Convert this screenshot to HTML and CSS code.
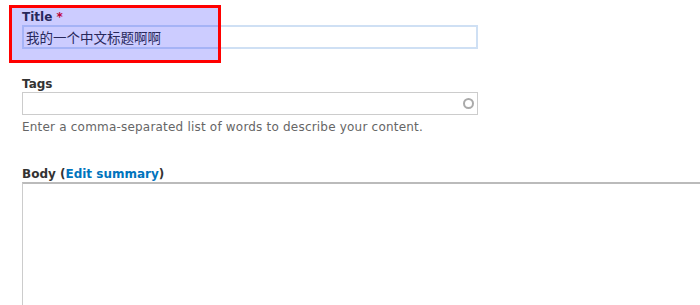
FILE: index.html
```html
<!DOCTYPE html>
<html lang="zh">
<head>
    <meta charset="UTF-8">
    <title>Create Article</title>
    <link rel="stylesheet" href="styles.css">
</head>
<body>
    <form class="node-form">
        <!-- Title -->
        <div class="form-item form-item-title">
            <label for="edit-title">Title <span class="form-required">*</span></label>
            <input type="text" id="edit-title" class="form-text focused" value="我的一个中文标题啊啊">
            <div class="highlight"></div>
        </div>

        <!-- Tags -->
        <div class="form-item form-item-tags">
            <label for="edit-tags">Tags</label>
            <div class="autocomplete">
                <input type="text" id="edit-tags" class="form-text">
                <span class="throbber"></span>
            </div>
            <div class="description">Enter a comma-separated list of words to describe your content.</div>
        </div>

        <!-- Body -->
        <div class="form-item form-item-body">
            <label for="edit-body">Body (<a href="#">Edit summary</a>)</label>
            <textarea id="edit-body" class="form-textarea"></textarea>
        </div>
    </form>
</body>
</html>
```

FILE: styles.css
```css
body {
    margin: 0;
    background-color: #fff;
    color: #333;
    font-family: "DejaVu Sans", Verdana, "Noto Sans CJK SC", sans-serif;
    font-size: 12px;
    overflow: hidden;
}
.node-form {
    padding: 9px 0 0 22px;
}
.form-item {
    position: relative;
}
label {
    display: block;
    font-weight: bold;
    line-height: 16px;
    color: #333;
}
label a {
    color: #0074bd;
    text-decoration: none;
}
.form-required {
    color: #e00;
}
.form-text {
    display: block;
    box-sizing: border-box;
    width: 456px;
    height: 24px;
    margin: 0;
    padding: 0 3px;
    border: 1px solid #ccc;
    background-color: #fff;
    font-family: "DejaVu Sans", "Noto Sans CJK SC", sans-serif;
    font-size: 13.5px;
    color: #333;
}
.form-text.focused {
    border: 2px solid #cfe0f4;
    padding: 0 2px;
}
.form-item-title {
    margin-bottom: 27px;
}
.highlight {
    position: absolute;
    left: -13px;
    top: -4px;
    width: 206px;
    height: 52px;
    border: 3px solid #f00;
    background-color: rgba(0, 0, 255, 0.2);
}
.autocomplete {
    position: relative;
    width: 456px;
}
.form-item-tags .form-text {
    height: 23px;
}
.throbber {
    position: absolute;
    right: 4px;
    top: 6px;
    width: 7px;
    height: 7px;
    border: 2px solid #aaa;
    border-radius: 50%;
}
.description {
    margin-top: 3px;
    color: #666;
    line-height: 18px;
    letter-spacing: 0.2px;
}
.form-item-tags {
    margin-bottom: 30px;
}
.form-textarea {
    display: block;
    box-sizing: border-box;
    width: 700px;
    height: 140px;
    margin: 0;
    border: 1px solid #ccc;
    border-top: 2px solid #bbb;
    resize: none;
}
```
